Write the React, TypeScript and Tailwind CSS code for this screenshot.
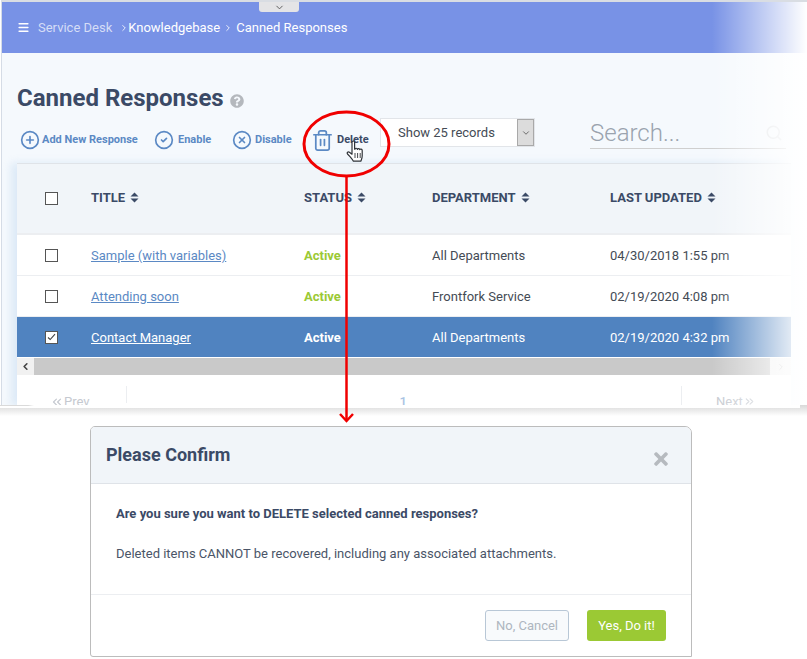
import { ChevronDown, ChevronLeft, ChevronRight, ChevronsLeft, ChevronsRight, CircleCheck, CirclePlus, CircleX, Menu, Search, Trash2 } from 'lucide-react';
import { FaQuestionCircle, FaTimes } from 'react-icons/fa';

const SortIcon = () => (
  <svg width="9" height="11" viewBox="0 0 9 11" className="text-[#3b4a66] shrink-0">
    <path d="M4.5 0.5 L8.5 4.5 H0.5 Z M0.5 6.5 H8.5 L4.5 10.5 Z" fill="currentColor" />
  </svg>
);

const HandCursor = () => (
  <svg width="20" height="24" viewBox="0 0 20 24">
    <path
      d="M6 2.2c0-1.6 2.6-1.6 2.6 0v7l.4 0c0-1.3 2.4-1.3 2.4.2.2-1.2 2.4-1.2 2.4.3.3-1 2.4-.9 2.4.7v5.6c0 2.4-.7 3.4-1.4 5.2H7.4c-.8-1.6-2-3-3.4-4.6L1.5 14c-1-1.3.6-2.8 1.9-1.8L6 14.2z"
      fill="white"
      stroke="#2f3338"
      strokeWidth="1.2"
      strokeLinejoin="round"
    />
    <path d="M9 13v5M11.6 13v5M14.2 13v5" stroke="#2f3338" strokeWidth="0.9" />
  </svg>
);

const Checkbox = ({ checked = false }: { checked?: boolean }) => (
  <span className="w-[13px] h-[13px] border border-[#555] bg-white flex items-center justify-center">
    {checked && (
      <svg width="9" height="8" viewBox="0 0 9 8">
        <path d="M1 4.5 L3.2 6.5 L8 1.2" fill="none" stroke="#444" strokeWidth="1.1" />
      </svg>
    )}
  </span>
);

const ToolButton = ({ icon, label, className }: { icon: React.ReactNode; label: string; className: string }) => (
  <div className={`flex items-center text-[11px] font-bold text-[#5b89c4] ${className}`}>
    {icon}
    <span>{label}</span>
  </div>
);

const rows = [
  { title: 'Sample (with variables)', dept: 'All Departments', updated: '04/30/2018 1:55 pm' },
  { title: 'Attending soon', dept: 'Frontfork Service', updated: '02/19/2020 4:08 pm' },
  { title: 'Contact Manager', dept: 'All Departments', updated: '02/19/2020 4:32 pm', selected: true },
];

const gridCols = 'grid grid-cols-[74px_213px_128px_178px_1fr] items-center';

const App = () => {
  return (
    <div className="relative w-[807px] h-[659px] overflow-hidden bg-white font-['Roboto',sans-serif]">
      <div className="h-[405px] overflow-hidden border-t-2 border-[#d9dde3] ml-px border-l border-l-[#d5dce6] bg-[#f5f9fd]">
        <div className="relative h-[51px] bg-[#7892e6] flex items-center pl-[15px] text-[13px] text-white">
          <div className="absolute left-[257px] top-0 w-[40px] h-[10px] bg-[#e4e4e6] rounded-b-[3px] flex items-center justify-center">
            <ChevronDown size={11} className="text-[#555]" />
          </div>
          <Menu size={13} strokeWidth={3} />
          <span className="ml-[8px] text-[#d5ddf6]">Service Desk</span>
          <ChevronRight size={10} className="ml-[7px]" />
          <span className="-ml-px">Knowledgebase</span>
          <ChevronRight size={10} className="ml-[3px] mr-[3px]" />
          <span>Canned Responses</span>
        </div>

        <div className="flex items-center pl-[15px] mt-[29px] h-[32px]">
          <h1 className="text-[24px] font-bold text-[#3b4a66]">Canned Responses</h1>
          <FaQuestionCircle size={14} className="ml-[6px] mt-[5px] text-[#b4b8bd]" />
        </div>

        <div className="flex items-start pl-[18px] mt-[4px] h-[45px]">
          <div className="flex items-center h-[28px] mt-[8px]">
            <ToolButton className="w-[134px]" label="Add New Response" icon={<CirclePlus size={20} strokeWidth={2} className="mr-[2px]" />} />
            <ToolButton className="w-[78px]" label="Enable" icon={<CircleCheck size={20} strokeWidth={2} className="mr-[4px]" />} />
            <ToolButton className="w-[79px]" label="Disable" icon={<CircleX size={20} strokeWidth={2} className="mr-[3px]" />} />
            <div className="flex items-center w-[69px] text-[11px] font-bold text-[#3b4a66]">
              <Trash2 size={23} strokeWidth={1.8} className="mr-[3px] text-[#5b89c4]" />
              <span>Delete</span>
            </div>
          </div>
          <div className="flex items-stretch w-[155px] h-[29px] bg-white border border-[#e2e5e9] text-[13px] text-[#444b55]">
            <span className="flex-1 pl-[17px] flex items-center">Show 25 records</span>
            <span className="w-[17px] bg-[#dcdcdc] border border-[#a9a9a9] flex items-center justify-center">
              <ChevronDown size={10} className="text-[#555]" />
            </span>
          </div>
          <div className="ml-[55px] w-[196px] h-[31px] border-b border-[#cfcfcf] flex items-center justify-between pr-[3px]">
            <span className="text-[24px] font-light text-[#9aa3ae]">Search...</span>
            <Search size={18} className="text-[#dfe2e5]" />
          </div>
        </div>

        <div className="ml-[15px] w-[774px] bg-white shadow-[-6px_0_8px_rgba(190,215,240,0.45)]">
          <div className={`${gridCols} h-[72px] bg-[#f1f5f9] border-t border-[#dfe3e8] border-b-2 border-b-[#eceef1] text-[13px] font-bold text-[#3b4a66]`}>
            <div className="pl-[28px] flex">
              <Checkbox />
            </div>
            {['TITLE', 'STATUS', 'DEPARTMENT', 'LAST UPDATED'].map(h => (
              <div key={h} className="flex items-center gap-[5px] pb-[2px]">
                {h}
                <SortIcon />
              </div>
            ))}
          </div>
          {rows.map(r => (
            <div
              key={r.title}
              className={`${gridCols} h-[41px] border-b text-[13px] ${r.selected ? 'bg-[#5083c0] text-white border-b-white' : 'bg-white text-[#444b55] border-b-[#eceef1]'}`}
            >
              <div className="pl-[28px] flex">
                <Checkbox checked={r.selected} />
              </div>
              <a className={`underline pt-[2px] ${r.selected ? 'text-white' : 'text-[#5b89c4]'}`}>{r.title}</a>
              <span className={`font-bold pt-px ${r.selected ? 'text-white' : 'text-[#9bc934]'}`}>Active</span>
              <span className="pt-px">{r.dept}</span>
              <span className="pt-px">{r.updated}</span>
            </div>
          ))}
          <div className="flex items-center h-[17px] bg-[#f1f1f1]">
            <div className="w-[17px] flex justify-center">
              <ChevronLeft size={11} strokeWidth={3.5} className="text-[#444]" />
            </div>
            <div className="w-[736px] h-full bg-[#c9c9c9]" />
            <div className="flex-1 flex justify-center">
              <ChevronRight size={10} className="text-[#bbb]" />
            </div>
          </div>
          <div className="relative flex items-center h-[31px] pt-[22px] text-[13px] text-[#c5c9d0]">
            <div className="absolute left-[109px] top-[11px] h-[20px] border-l border-[#eceef1]" />
            <div className="absolute left-[664px] top-[11px] h-[20px] border-l border-[#eceef1]" />
            <span className="ml-[33px] flex items-center">
              <ChevronsLeft size={14} />
              Prev
            </span>
            <span className="ml-[310px] text-[#a9c3e4] font-medium">1</span>
            <span className="ml-[309px] flex items-center">
              Next
              <ChevronsRight size={13} />
            </span>
          </div>
        </div>
      </div>

      {/* right side fade of the cropped page */}
      <div className="absolute left-[712px] top-[2px] w-[95px] h-[403px] bg-gradient-to-r from-white/0 via-white/70 via-70% to-white" />

      {/* torn edge of the cropped page */}
      <svg width="807" height="22" viewBox="0 0 807 22" className="absolute left-0 top-[396px]">
        <defs>
          <linearGradient id="tear" x1="0" y1="0" x2="0" y2="1">
            <stop offset="0" stopColor="#d8d8d8" />
            <stop offset="1" stopColor="#ffffff" />
          </linearGradient>
        </defs>
        <rect x="0" y="9" width="807" height="11" fill="url(#tear)" />
        <path
          d="M0 10 H28 L34 9 H90 L98 7 H150 L155 8 H184 L190 7 H245 L252 9 H400 L420 9 H450 L480 8 H515 L530 9 H800 V12 H0 Z"
          fill="white"
        />
      </svg>

      <div className="relative ml-[90px] mt-[21px] w-[602px] h-[231px] border border-[#bcbcbc] rounded-tl-[5px] rounded-tr-[7px] rounded-bl-[3px] bg-white overflow-hidden">
        <div className="flex items-center justify-between h-[57px] bg-[#f1f5f9] border-b border-[#dfe3e8] pl-[15px] pr-[20px]">
          <span className="text-[18px] font-bold text-[#3b4a66] pb-[2px]">Please Confirm</span>
          <FaTimes size={20} className="text-[#b6babf] mt-[8px]" />
        </div>
        <div className="h-[111px] border-b border-[#eceef1] pl-[25px] pt-[20px] text-[13px] text-[#3b4a66]">
          <p className="font-bold h-[40px]">Are you sure you want to DELETE selected canned responses?</p>
          <p className="text-[#4a5568]">Deleted items CANNOT be recovered, including any associated attachments.</p>
        </div>
        <div className="flex justify-end gap-[18px] pr-[25px] pt-[15px] text-[13px]">
          <button className="w-[84px] h-[31px] rounded-[3px] border border-[#b8c7d6] bg-[#f8fafc] text-[#aeb6bf]">No, Cancel</button>
          <button className="w-[79px] h-[31px] rounded-[3px] bg-[#9bc934] text-white">Yes, Do it!</button>
        </div>
      </div>

      {/* red callout drawn over the screenshot */}
      <svg width="807" height="659" viewBox="0 0 807 659" className="absolute left-0 top-0 pointer-events-none">
        <ellipse cx="346.5" cy="144" rx="42.5" ry="32" fill="none" stroke="#f00000" strokeWidth="3" />
        <path d="M346.5 176 V420" stroke="#f00000" strokeWidth="2.5" />
        <path d="M340 414 L346.5 421 L353 414" fill="none" stroke="#f00000" strokeWidth="2.5" />
      </svg>
      <div className="absolute left-[346px] top-[140px]">
        <HandCursor />
      </div>
    </div>
  );
};

export default App;
